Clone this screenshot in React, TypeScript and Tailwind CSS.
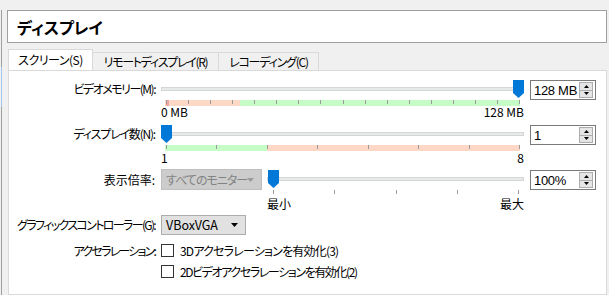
const jp = "[font-family:'Noto_Sans_CJK_JP','Noto_Sans',sans-serif] [font-feature-settings:'palt']";

const Thumb = ({ left }: { left: number }) => (
  <svg className="absolute top-0" style={{ left }} width="11" height="18" viewBox="0 0 11 18">
    <path d="M0 0 H11 V13 L5.5 18 L0 13 Z" fill="#0078d7" />
  </svg>
);

const Track = () => (
  <div className="absolute left-0 right-0 top-[7px] h-[4px] border border-[#d6d6d6] bg-[#e7eaea]" />
);

// 色付きバー + 目盛り
const RangeBar = ({
  split,
  left,
  right,
  ticks,
  red,
}: {
  split: number;
  left: string;
  right: string;
  ticks: number;
  red?: boolean;
}) => {
  const x0 = 4;
  const x1 = 359;
  const t0 = 5;
  const t1 = 358;
  return (
    <svg width="363" height="6" className="block">
      <rect x={x0} y="0" width={split - x0} height="6" fill={left} />
      <rect x={split} y="0" width={x1 - split} height="6" fill={right} />
      {red && <rect x="5" y="0" width="3" height="6" fill="#f3a5a5" />}
      {Array.from({ length: ticks + 1 }).map((_, i) => {
        const x = Math.round(t0 + ((t1 - t0) * i) / ticks);
        return <rect key={i} x={x} y="0" width="1" height="4" fill="#9a9a9a" />;
      })}
    </svg>
  );
};

const SpinBox = ({ value }: { value: string }) => (
  <div className="w-[66px] h-[20px] border border-[#7a7a7a] bg-white flex items-center justify-between pl-[3px] pr-[2px]">
    <span className="text-[13px] leading-none text-black [font-family:'Liberation_Sans',sans-serif] tracking-[-0.3px]">
      {value}
    </span>
    <div className="flex flex-col w-[14px] h-[16px]">
      <div className="flex-1 border border-[#adadad] bg-[#e5e5e5] flex items-center justify-center">
        <svg width="5" height="3" viewBox="0 0 5 3">
          <path d="M2.5 0 L5 3 H0 Z" fill="#000" />
        </svg>
      </div>
      <div className="flex-1 border border-t-0 border-[#adadad] bg-[#e5e5e5] flex items-center justify-center">
        <svg width="5" height="3" viewBox="0 0 5 3">
          <path d="M0 0 H5 L2.5 3 Z" fill="#000" />
        </svg>
      </div>
    </div>
  </div>
);

const Label = ({ text, h, cls = "" }: { text: string; h: number; cls?: string }) => (
  <div
    className={`w-[146px] text-right shrink-0 whitespace-nowrap text-[12px] text-black ${cls}`}
    style={{ height: h, lineHeight: `${h}px` }}
  >
    {text}
  </div>
);

const CheckRow = ({ label, text, cls = "" }: { label: string; text: string; cls?: string }) => (
  <div className="flex h-[21px] items-center">
    <Label text={label} h={21} cls="tracking-[-1.8px]" />
    <div className="ml-[6px] w-[13px] h-[13px] border border-[#333333] bg-white" />
    <span className={`ml-[6px] whitespace-nowrap text-[12px] text-black ${cls}`}>{text}</span>
  </div>
);

export default function App() {
  return (
    <div className={`w-[609px] h-[295px] bg-[#f0f0f0] flex overflow-hidden ${jp}`}>
      <div className="w-[2px] mt-[10px] flex flex-col">
        <div className="h-[57px] border-r border-[#a0a0a0]" />
        <div className="h-[40px] border-r border-[#9fc9ef]" />
        <div className="flex-1 border-r border-[#a0a0a0]" />
      </div>

      <div className="ml-[5px] pt-[10px] w-[600px] flex flex-col">
        {/* タイトル */}
        <div className="h-[33px] border border-[#a0a0a0] bg-white flex items-center pl-[9px]">
          <span className="text-[16px] font-bold text-black">ディスプレイ</span>
        </div>

        {/* タブ */}
        <div className="mt-[7px] ml-[1px] flex items-end h-[20px] relative z-10 whitespace-nowrap">
          <div className="w-[85px] h-[21px] bg-white border border-b-0 border-[#d9d9d9] text-[12px] flex items-center justify-center pb-[1px] tracking-[-0.5px]">
            スクリーン(S)
          </div>
          <div className="w-[126px] h-[18px] bg-[#f0f0f0] border border-l-0 border-b-0 border-[#d9d9d9] text-[12px] flex items-center justify-center tracking-[-1.3px]">
            リモートディスプレイ(R)
          </div>
          <div className="w-[100px] h-[18px] bg-[#f0f0f0] border border-l-0 border-b-0 border-[#d9d9d9] text-[12px] flex items-center justify-center tracking-[-1.2px]">
            レコーディング(C)
          </div>
        </div>

        {/* ペイン */}
        <div className="ml-[1px] flex-1 bg-white border border-[#d9d9d9] pt-[9px]">
          {/* ビデオメモリー */}
          <div className="flex h-[45px]">
            <Label text="ビデオメモリー(M):" h={18} cls="tracking-[-1.5px]" />
            <div className="ml-[6px] w-[363px]">
              <div className="relative h-[18px]">
                <Track />
                <Thumb left={352} />
              </div>
              <div className="mt-[2px]">
                <RangeBar split={79} left="#fdd8c6" right="#c6fcc6" ticks={16} red />
              </div>
              <div className="flex justify-between text-[12px] leading-[12px] text-black">
                <span>0 MB</span>
                <span>128 MB</span>
              </div>
            </div>
            <div className="ml-[6px]">
              <SpinBox value="128 MB" />
            </div>
          </div>

          {/* ディスプレイ数 */}
          <div className="flex h-[44px]">
            <Label text="ディスプレイ数(N):" h={18} cls="tracking-[-1.2px]" />
            <div className="ml-[6px] w-[363px]">
              <div className="relative h-[18px]">
                <Track />
                <Thumb left={0} />
              </div>
              <div className="mt-[2px]">
                <RangeBar split={106} left="#c6fcc6" right="#fdd8c6" ticks={7} />
              </div>
              <div className="flex justify-between text-[12px] leading-[12px] mt-[1px] text-black">
                <span>1</span>
                <span>8</span>
              </div>
            </div>
            <div className="ml-[6px]">
              <SpinBox value="1" />
            </div>
          </div>

          {/* 表示倍率 */}
          <div className="flex h-[46px]">
            <Label text="表示倍率:" h={21} />
            <div className="ml-[6px] w-[101px] h-[21px] bg-[#cccccc] border border-[#bfbfbf] flex items-center justify-between pl-[4px] pr-[7px]">
              <span className="text-[12px] text-[#838383] whitespace-nowrap tracking-[-1px]">すべてのモニター</span>
              <svg width="7" height="4" viewBox="0 0 7 4" className="shrink-0">
                <path d="M0 0 H7 L3.5 4 Z" fill="#9a9a9a" />
              </svg>
            </div>
            <div className="ml-[5px] w-[257px] mt-[1px]">
              <div className="relative h-[18px]">
                <Track />
                <Thumb left={1} />
              </div>
              <svg width="257" height="4" className="block mt-[2px]">
                {[6, 67, 129, 190, 251].map((x) => (
                  <rect key={x} x={x} y="0" width="1" height="4" fill="#9a9a9a" />
                ))}
              </svg>
              <div className="flex justify-between text-[12px] leading-[14px] mt-[3px] text-black">
                <span>最小</span>
                <span>最大</span>
              </div>
            </div>
            <div className="ml-[6px] mt-[1px]">
              <SpinBox value="100%" />
            </div>
          </div>

          {/* グラフィックスコントローラー */}
          <div className="flex h-[25px]">
            <Label text="グラフィックスコントローラー(G):" h={20} cls="tracking-[-1.65px]" />
            <div className="ml-[6px] w-[85px] h-[20px] bg-[#e1e1e1] border border-[#adadad] flex items-center justify-between pl-[4px] pr-[7px]">
              <span className="text-[12.5px] text-black">VBoxVGA</span>
              <svg width="7" height="4" viewBox="0 0 7 4">
                <path d="M0 0 H7 L3.5 4 Z" fill="#000" />
              </svg>
            </div>
          </div>

          <CheckRow label="アクセラレーション:" text="3Dアクセラレーションを有効化(3)" cls="tracking-[-0.8px]" />
          <CheckRow label="" text="2Dビデオアクセラレーションを有効化(2)" cls="tracking-[-1.4px]" />
        </div>
      </div>
    </div>
  );
}
